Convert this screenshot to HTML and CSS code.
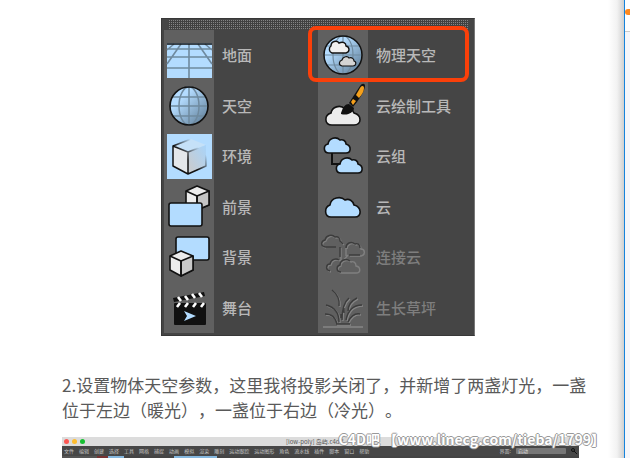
FILE: index.html
```
<!DOCTYPE html>
<html lang="zh-CN">
<head>
    <meta charset="UTF-8">
    <meta name="viewport" content="width=device-width, initial-scale=1.0">
    <title>C4D 物理天空</title>
    <link rel="stylesheet" href="styles.css">
</head>
<body>
    <main class="article">
        <div class="palette">
            <div class="grip"></div>
            <div class="tools">
                <ul class="tool-list">
                    <li class="tool">
                        <span class="icon"><svg width="50" height="50" viewBox="0 0 50 50">
                            <path d="M3 13h45v35H3z" fill="#b3dcff"/>
                            <path d="M3 19h45M3 27h45M3 38h45M25 14v34M17 14L3 34M10 14L3 20M34 14l14 20M41 14l7 6" fill="none" stroke="#6f8a9f" stroke-width="1.6"/>
                            <path d="M3 14h45" stroke="#111" stroke-width="1.6"/>
                        </svg></span>
                        <span class="label">地面</span>
                    </li>
                    <li class="tool">
                        <span class="icon"><svg width="50" height="50" viewBox="0 0 50 50">
                            <defs><linearGradient id="globe" x1="0" y1="0" x2="1" y2="1"><stop offset="0.3" stop-color="#b4dcff"/><stop offset="1" stop-color="#58768f"/></linearGradient></defs>
                            <circle cx="25" cy="25" r="19" fill="url(#globe)"/>
                            <path d="M25 6v38M6 25h38M9 16h32M9 35h32" fill="none" stroke="#6f8a9f" stroke-width="1.5"/>
                            <ellipse cx="25" cy="25" rx="10" ry="19" fill="none" stroke="#6f8a9f" stroke-width="1.5"/>
                            <circle cx="25" cy="25" r="19" fill="none" stroke="#111" stroke-width="1.6"/>
                        </svg></span>
                        <span class="label">天空</span>
                    </li>
                    <li class="tool">
                        <span class="icon"><svg width="50" height="50" viewBox="0 0 50 50">
                            <defs>
                                <linearGradient id="side" x1="0" y1="1" x2="1" y2="0"><stop offset="0.2" stop-color="#c6ccd2"/><stop offset="1" stop-color="#a8d4fa"/></linearGradient>
                                <linearGradient id="edge" gradientUnits="userSpaceOnUse" x1="12" y1="38" x2="38" y2="12"><stop offset="0.4" stop-color="#111"/><stop offset="0.85" stop-color="#111" stop-opacity="0"/></linearGradient>
                            </defs>
                            <path d="M3 3h45v45H3z" fill="#b3dcff"/>
                            <path d="M9 15l15 6v22L9 35z" fill="#e4e7ea"/>
                            <path d="M9 15L27 8l15 6-18 7z" fill="#c5e1f8"/>
                            <path d="M24 21l18-7v21l-18 8z" fill="url(#side)"/>
                            <path d="M27 8L9 15v20l15 8 18-8V14L27 8M9 15l15 6v22M24 21l18-7" fill="none" stroke="url(#edge)" stroke-width="1.5" stroke-linejoin="round"/>
                        </svg></span>
                        <span class="label">环境</span>
                    </li>
                    <li class="tool">
                        <span class="icon"><svg width="50" height="50" viewBox="0 0 50 50">
                            <g stroke="#111" stroke-width="1.6" stroke-linejoin="round">
                                <path d="M22 9l11-5 12 5v14l-12 5-11-6z" fill="#ececec"/>
                                <path d="M33 14l12-5v14l-12 5z" fill="#c4c4c4"/>
                                <path d="M22 9l11 5v14" fill="none"/>
                                <rect x="5" y="21" width="33" height="23" rx="2" fill="#b3dcff"/>
                            </g>
                        </svg></span>
                        <span class="label">前景</span>
                    </li>
                    <li class="tool">
                        <span class="icon"><svg width="50" height="50" viewBox="0 0 50 50">
                            <g stroke="#111" stroke-width="1.6" stroke-linejoin="round">
                                <rect x="12" y="5" width="33" height="23" rx="2" fill="#b3dcff"/>
                                <path d="M6 24l11-5 12 5v14l-12 6-11-6z" fill="#ececec"/>
                                <path d="M17 29l12-5v14l-12 6z" fill="#c9c9c9"/>
                                <path d="M6 24l11 5v15" fill="none"/>
                            </g>
                        </svg></span>
                        <span class="label">背景</span>
                    </li>
                    <li class="tool">
                        <span class="icon"><svg width="50" height="50" viewBox="0 0 50 50">
                            <rect x="10" y="20" width="32" height="22" rx="1" fill="#111"/>
                            <path d="M9 15l31-6 1 4-31 6z" fill="#111"/>
                            <path d="M14 14l3 4M21 13l3 4M28 11l3 4M35 10l3 4M16 20l-3 4M24 20l-3 4M32 20l-3 4M40 20l-3 4" stroke="#fff" stroke-width="2.6"/>
                            <path d="M20 28l12 5-12 5 3-5z" fill="#b3dcff"/>
                        </svg></span>
                        <span class="label">舞台</span>
                    </li>
                </ul>
                <ul class="tool-list">
                    <li class="tool marked">
                        <span class="icon"><svg width="50" height="50" viewBox="0 0 50 50">
                            <circle cx="25" cy="25" r="19" fill="url(#globe)"/>
                            <path d="M25 6v38M6 25h38M9 16h32M9 35h32" fill="none" stroke="#6f8a9f" stroke-width="1.2"/>
                            <ellipse cx="25" cy="25" rx="10" ry="19" fill="none" stroke="#6f8a9f" stroke-width="1.2"/>
                            <circle cx="25" cy="25" r="19" fill="none" stroke="#111" stroke-width="1.5"/>
                            <path d="M14 23a4 4 0 0 1-1-7c0-5 6-6 8-3 4-2 7 0 7 3 4 1 4 6 0 7z" fill="#f0f0f0" stroke="#111" stroke-width="1.4"/>
                            <path d="M24 36c-4-1-3-5 0-6 1-4 6-4 7-2 3-1 5 1 5 3 3 1 2 5-1 5z" fill="#d4d4d4" stroke="#111" stroke-width="1.2"/>
                        </svg></span>
                        <span class="label">物理天空</span>
                    </li>
                    <li class="tool">
                        <span class="icon"><svg width="50" height="50" viewBox="0 0 50 50">
                            <path d="M14 44c-8 0-8-10-1-12 1-6 9-9 14-4 4-2 8 1 9 4 8 2 8 12 0 12z" fill="#ececec" stroke="#111" stroke-width="1.6"/>
                            <path d="M23 32c2-6 4-9 8-9l5 4c0 4-6 8-13 6z" fill="#111"/>
                            <path d="M31 22L42 5c2-3 5-3 5 0 0 5-7 15-12 21z" fill="#111"/>
                            <path d="M38 14l4-7c2-3 4-2 4 0 0 3-2 7-5 10z" fill="#f5a01c"/>
                            <path d="M33 21l2-3 3 2-3 4z" fill="#f5a01c"/>
                        </svg></span>
                        <span class="label">云绘制工具</span>
                    </li>
                    <li class="tool">
                        <span class="icon"><svg width="50" height="50" viewBox="0 0 50 50">
                            <path d="M14 22v11h8" fill="none" stroke="#111" stroke-width="2"/>
                            <g fill="#b3dcff" stroke="#111" stroke-width="1.6">
                                <path d="M11 22c-6 0-6-8-1-9 1-6 8-8 12-4 3-1 6 1 6 4 6 2 5 9 0 9z"/>
                                <path d="M23 42c-6 0-6-8-1-9 1-6 8-8 12-4 3-1 6 1 6 4 6 2 5 9 0 9z"/>
                            </g>
                        </svg></span>
                        <span class="label">云组</span>
                    </li>
                    <li class="tool">
                        <span class="icon"><svg width="50" height="50" viewBox="0 0 50 50">
                            <path d="M13 35c-7 0-7-10-1-12 1-8 11-9 15-5 4-2 8 1 9 5 8 2 8 12 1 12z" fill="#b3dcff" stroke="#111" stroke-width="1.6"/>
                        </svg></span>
                        <span class="label">云</span>
                    </li>
                    <li class="tool disabled">
                        <span class="icon"><svg width="50" height="50" viewBox="0 0 50 50">
                            <g fill="none" stroke="#808080" stroke-width="1.4" transform="translate(1 1)">
                                <path d="M7 15c-5-1-4-6 0-7 1-5 7-6 10-3 3-1 5 1 5 4l3 3M31 23h11c5-1 4-7 0-7 0-4-3-5-5-4-4-3-9-1-9 4M12 39c-5-1-4-7 0-7 1-5 6-6 9-4M25 40h12c5 0 5-6 0-7 0-4-3-5-5-4-4-3-10-1-10 4-4 1-4 7 1 7zM22 30v-15M27 23v-8M24 28l5-6"/>
                            </g>
                            <g fill="none" stroke="#3c3c3c" stroke-width="1.4">
                                <path d="M7 15c-5-1-4-6 0-7 1-5 7-6 10-3 3-1 5 1 5 4l3 3M31 23h11M42 16c0-4-3-5-5-4-4-3-9-1-9 4M12 39c-5-1-4-7 0-7 1-5 6-6 9-4M32 29c-4-3-10-1-10 4-4 1-4 7 1 7M22 25V15M7 15h11"/>
                            </g>
                        </svg></span>
                        <span class="label">连接云</span>
                    </li>
                    <li class="tool disabled">
                        <span class="icon"><svg width="50" height="50" viewBox="0 0 50 50">
                            <g fill="none" stroke="#858585" stroke-width="1.4">
                                <path d="M5 44h40M19 42h14M22 40c0-10-5-15-13-17M25 38c0-12 2-18 7-22M29 38c2-10 8-15 16-15M20 42c-2-7-5-10-12-10M31 40c3-6 7-9 12-8M22 24c1-7-2-12-7-16M31 29c0-8 5-11 9-13"/>
                            </g>
                            <g fill="none" stroke="#3c3c3c" stroke-width="1.4">
                                <path d="M18 41h14M21 39c0-10-5-15-13-17M24 37c0-12 2-18 7-22M28 37c2-10 8-15 16-15M19 41c-2-7-5-10-12-10M30 39c3-6 7-9 12-8M21 23c1-7-2-12-7-16M30 28c0-8 5-11 9-13M26 25v5M23 31v4"/>
                            </g>
                        </svg></span>
                        <span class="label">生长草坪</span>
                    </li>
                </ul>
            </div>
        </div>

        <p class="step">2.设置物体天空参数，这里我将投影关闭了，并新增了两盏灯光，一盏位于左边（暖光），一盏位于右边（冷光）。</p>

        <div class="c4d">
            <div class="titlebar">
                <span class="dot red"></span>
                <span class="dot yellow"></span>
                <span class="dot green"></span>
                <span class="filename">[low-poly] 岛屿.c4d *</span>
            </div>
            <div class="menubar">
                <span>文件</span><span>编辑</span><span>创建</span><span>选择</span><span>工具</span><span>网格</span><span>捕捉</span><span>动画</span><span>模拟</span><span>渲染</span><span>雕刻</span><span>运动跟踪</span><span>运动图形</span><span>角色</span><span>流水线</span><span>插件</span><span>脚本</span><span>窗口</span><span>帮助</span>
                <label class="layout-label" for="layout">界面:</label>
                <select class="layout" id="layout"><option>启动</option></select>
                <svg class="search" width="6" height="6" viewBox="0 0 6 6"><circle cx="2" cy="2" r="1.5" fill="none" stroke="#111"/><path d="M3 3l3 3" stroke="#111"/></svg>
            </div>
            <div class="toolbar"></div>
            <div class="watermark">C4D吧 【www.linecg.com/tieba/1799】</div>
        </div>
    </main>
    <aside class="side">
        <div class="side-top"><span class="badge"></span></div>
    </aside>
</body>
</html>
```

FILE: styles.css
```
* {
    box-sizing: border-box;
}
body {
    margin: 0;
    height: 100vh;
    display: flex;
    overflow: hidden;
    background: #fff;
    font-family: "Noto Sans CJK SC", sans-serif;
    text-spacing-trim: space-all;
}
.article {
    flex: 1;
    padding: 18px 34px 0 62px;
    background: linear-gradient(to left, #d0d0d0, #f2f2f2 7px, #fff 16px);
}

/* tool palette */
.palette {
    width: 314px;
    margin-left: 99px;
    padding: 1px 2px 2px;
    background: #454545;
    border: 1px solid #383838;
    border-right-color: #777;
}
.grip {
    height: 9px;
    margin: 0 4px 1px 5px;
    background: conic-gradient(#414141 75%, #858585 0) 0 0 / 2px 2px;
}
.tools {
    display: grid;
    grid-template-columns: 1fr 1fr;
    min-height: 303px;
}
.tool-list {
    display: grid;
    grid-auto-rows: 1fr;
    margin: 0;
    padding: 0;
    list-style: none;
    background: linear-gradient(to right, #606060 50px, #454545 50px);
}
.tool {
    position: relative;
    display: flex;
    align-items: center;
    gap: 8px;
    color: #b8b8b8;
    font-size: 15px;
    font-weight: 500;
    line-height: 24px;
}
.icon {
    display: flex;
}
.disabled {
    color: #7e7e7e;
}
.marked::after {
    content: "";
    position: absolute;
    top: -4px;
    left: -10px;
    right: 3px;
    bottom: -1px;
    border: 4px solid #fa400a;
    border-radius: 8px;
}

.step {
    margin: 36px 0 15px;
    color: #595959;
    font-size: 17px;
    line-height: 25px;
}

/* program window */
.c4d {
    position: relative;
    margin-right: 11px;
}
.titlebar {
    display: flex;
    align-items: center;
    gap: 3px;
    height: 9px;
    padding-left: 2px;
    background: #dcdcdc;
}
.dot {
    width: 5px;
    height: 5px;
    border-radius: 50%;
}
.red {
    background: #fc5753;
}
.yellow {
    background: #fdbc2e;
}
.green {
    background: #17c032;
}
.filename {
    margin-left: 198px;
    color: #555;
    font-size: 6px;
    line-height: 9px;
}
.menubar {
    display: flex;
    align-items: center;
    gap: 5px;
    height: 10px;
    padding: 0 2px;
    background: #474747;
    color: #c4c4c4;
    font-size: 5px;
    line-height: 8px;
}
.layout-label {
    margin-left: auto;
}
.layout {
    width: 50px;
    height: 6px;
    padding: 0 2px;
    border: 0;
    border-radius: 1px;
    background: #777;
    color: #ddd;
    font: inherit;
    line-height: 6px;
    appearance: none;
}
.toolbar {
    height: 12px;
    background: linear-gradient(to right, #555 35px, #733 35px, #733 46px, #85b8df 46px, #85b8df 62px, #444 62px, #444 112px, #85b8df 112px, #85b8df 155px, #444 155px);
}
.watermark {
    position: absolute;
    top: -5px;
    right: -26px;
    color: #fff;
    font-size: 14px;
    font-weight: 700;
    line-height: 14px;
    white-space: nowrap;
    text-shadow: 1px 0 #999, -1px 0 #999, 0 1px #999, 0 -1px #999;
}

.side {
    width: 6px;
    background: #f5f6fa;
    border-left: 1px solid #1583dc;
}
.side-top {
    height: 32px;
    padding-top: 9px;
    overflow: hidden;
    background: #fff;
    border-bottom: 1px solid #ccc;
}
.badge {
    display: block;
    width: 12px;
    height: 6px;
    border-radius: 3px;
    background: #ff8a1f;
}
```
